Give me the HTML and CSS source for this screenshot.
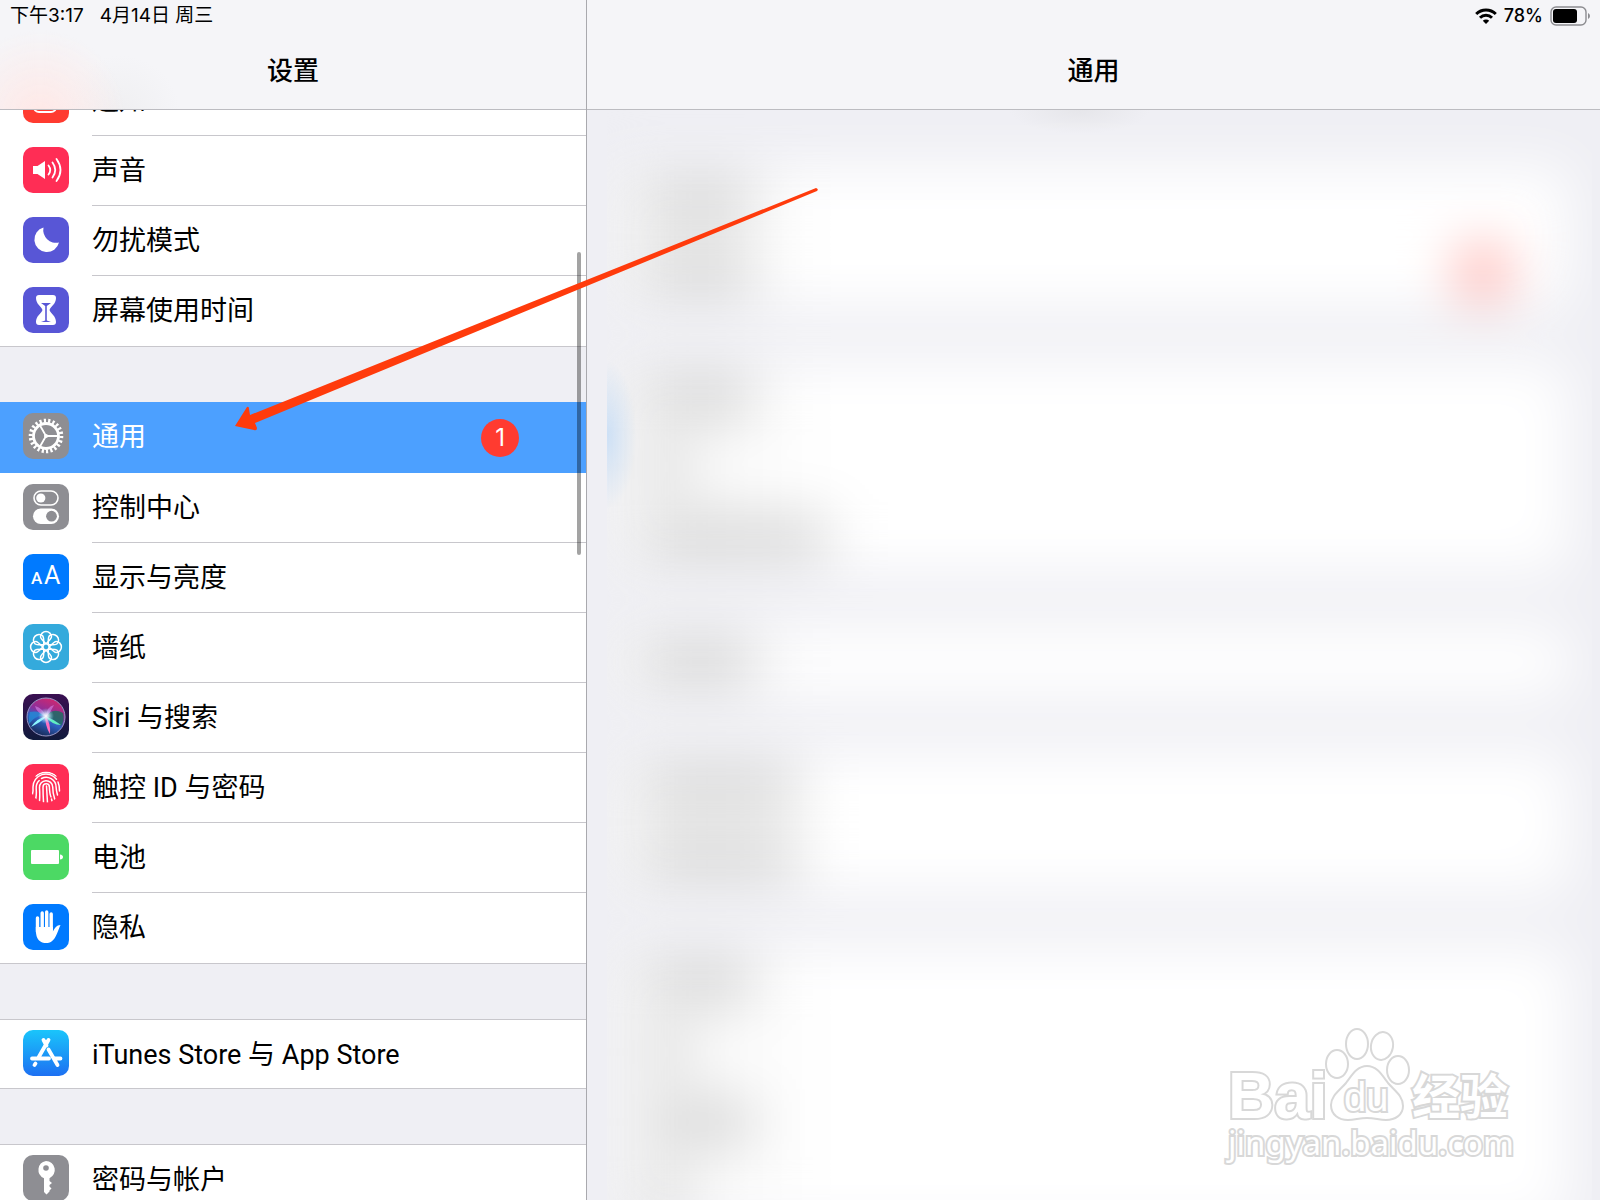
FILE: index.html
```html
<!DOCTYPE html>
<html lang="zh-CN">
<head>
    <meta charset="UTF-8">
    <meta name="viewport" content="width=device-width, initial-scale=1.0">
    <title>设置</title>
    <link rel="stylesheet" href="styles.css">
</head>
<body>
    <div class="settings">
        <aside class="sidebar">
            <header class="bar sidebar-bar">
                <div class="status">
                    <span>下午3:17</span>
                    <span>4月14日 周三</span>
                </div>
                <h1>设置</h1>
            </header>
            <nav class="list">
                <ul class="group scrolled">
                    <li><a class="row" href="#">
                        <svg class="icon red" viewBox="0 0 46 46"><rect x="11" y="12" width="22" height="23" rx="5" fill="none" stroke="#fff" stroke-width="2"/></svg>
                        <span class="label">通知</span>
                    </a></li>
                    <li><a class="row" href="#">
                        <svg class="icon pink" viewBox="0 0 46 46">
                            <path d="M10 19h4.500l7.500-5v18l-7.500-5H10z" fill="#fff"/>
                            <path d="M25.500 18.500q3.500 4.500 0 9M29.500 15.500q5.500 7.500 0 15M33.500 12q8 11 0 22" fill="none" stroke="#fff" stroke-width="1.800" stroke-linecap="round"/>
                        </svg>
                        <span class="label">声音</span>
                    </a></li>
                    <li><a class="row" href="#">
                        <svg class="icon purple" viewBox="0 0 46 46"><path d="M20.500 10.500A12.500 12.500 0 1 0 36 25.500A12.800 12.800 0 0 1 20.500 10.500Z" fill="#fff"/></svg>
                        <span class="label">勿扰模式</span>
                    </a></li>
                    <li><a class="row" href="#">
                        <svg class="icon purple" viewBox="0 0 46 46">
                            <path d="M16 8h14q3 0 3 3c0 6-5 8-6.500 12c1.500 4 6.500 6 6.500 12q0 3-3 3H16q-3 0-3-3c0-6 5-8 6.500-12c-1.500-4-6.500-6-6.500-12q0-3 3-3z" fill="#fff"/>
                            <path d="M18 16h10l-4.200 3v14.500l4.200 1.500H18l4.200-1.500v-14.500z" fill="#5856d6"/>
                        </svg>
                        <span class="label">屏幕使用时间</span>
                    </a></li>
                </ul>
                <ul class="group">
                    <li><a class="row selected" href="#" aria-current="page">
                        <svg class="icon gray" viewBox="0 0 46 46" fill="none" stroke="#fff">
                            <circle cx="23" cy="23" r="12.500" stroke-width="2.800"/>
                            <circle cx="23" cy="23" r="15.300" stroke-width="4" pathLength="44" stroke-dasharray="1 1"/>
                            <circle cx="23" cy="23" r="2" fill="#fff" stroke="none"/>
                            <path d="M23 23h12M23 23l-6-10.500M23 23l-6 10.500" stroke-width="1.800"/>
                        </svg>
                        <span class="label">通用</span>
                        <span class="badge">1</span>
                    </a></li>
                    <li><a class="row" href="#">
                        <svg class="icon gray" viewBox="0 0 46 46">
                            <rect x="11" y="7" width="24" height="14" rx="7" fill="none" stroke="#fff" stroke-width="1.600"/>
                            <circle cx="17.800" cy="14" r="4.600" fill="#fff"/>
                            <rect x="10" y="24.500" width="26" height="15.500" rx="7.700" fill="#fff"/>
                            <circle cx="28.500" cy="32.200" r="5.400" fill="#8e8e93"/>
                        </svg>
                        <span class="label">控制中心</span>
                    </a></li>
                    <li><a class="row" href="#">
                        <svg class="icon blue" viewBox="0 0 46 46" fill="#fff">
                            <text class="icon-text small" x="8" y="30">A</text>
                            <text class="icon-text" x="21" y="30">A</text>
                        </svg>
                        <span class="label">显示与亮度</span>
                    </a></li>
                    <li><a class="row" href="#">
                        <svg class="icon cyan" viewBox="0 0 46 46" fill="none" stroke="#fff" stroke-width="1.500">
                            <circle cx="23" cy="23" r="3.200"/>
                            <g id="petals">
                                <path d="M23 19.800C19.500 16.500 17.500 14.500 17.500 12.800a5.500 5.200 0 0 1 11 0C28.500 14.500 26.500 16.500 23 19.800z"/>
                                <path d="M23 19.800C19.500 16.500 17.500 14.500 17.500 12.800a5.500 5.200 0 0 1 11 0C28.500 14.500 26.500 16.500 23 19.800z" transform="rotate(90 23 23)"/>
                                <path d="M23 19.800C19.500 16.500 17.500 14.500 17.500 12.800a5.500 5.200 0 0 1 11 0C28.500 14.500 26.500 16.500 23 19.800z" transform="rotate(180 23 23)"/>
                                <path d="M23 19.800C19.500 16.500 17.500 14.500 17.500 12.800a5.500 5.200 0 0 1 11 0C28.500 14.500 26.500 16.500 23 19.800z" transform="rotate(270 23 23)"/>
                            </g>
                            <use href="#petals" transform="rotate(45 23 23)"/>
                        </svg>
                        <span class="label">墙纸</span>
                    </a></li>
                    <li><a class="row" href="#">
                        <svg class="icon siri" viewBox="0 0 46 46">
                            <defs>
                                <linearGradient id="orb" x1="0.700" y1="0" x2="0.300" y2="1">
                                    <stop offset="0" stop-color="#d3276d"/>
                                    <stop offset="0.400" stop-color="#8a2f9c"/>
                                    <stop offset="0.600" stop-color="#2d62c4"/>
                                    <stop offset="1" stop-color="#16254f"/>
                                </linearGradient>
                                <radialGradient id="glow">
                                    <stop offset="0" stop-color="#fff"/>
                                    <stop offset="0.300" stop-color="#e6f4ff" stop-opacity="0.800"/>
                                    <stop offset="1" stop-color="#7fdcff" stop-opacity="0"/>
                                </radialGradient>
                            </defs>
                            <circle cx="23" cy="23" r="19" fill="url(#orb)" stroke="#9a9ac8" stroke-width="1"/>
                            <path d="M23 23Q29 13 40 19Q42 26 38 32Q32 25 23 23z" fill="#16705f" opacity="0.800"/>
                            <path d="M23 22Q13 20 6 30Q5 24 7 18Q16 16 23 22z" fill="#2589d6" opacity="0.800"/>
                            <path d="M24 22Q14 24 8 33Q18 28 24 22z" fill="#8cf5ff"/>
                            <path d="M22 22Q30 25 38 31Q29 31 22 22z" fill="#5ff0c0"/>
                            <path d="M22 21Q28 29 27 40Q22 32 22 21z" fill="#ff6ec0"/>
                            <path d="M23 23Q13 18 12 12Q20 14 23 23Q24 12 31 11Q28 18 23 23z" fill="#d886e8" opacity="0.600"/>
                            <circle cx="23" cy="22" r="8" fill="url(#glow)"/>
                        </svg>
                        <span class="label">Siri 与搜索</span>
                    </a></li>
                    <li><a class="row" href="#">
                        <svg class="icon pink" viewBox="0 0 46 46">
                            <clipPath id="finger"><circle cx="23" cy="23" r="15.500"/></clipPath>
                            <g clip-path="url(#finger)" fill="none" stroke="#fff" stroke-width="1.500" stroke-linecap="round">
                                <path d="M23.500 22q.500 9 1 17M20.500 38q-.500-8-.500-15a3.200 3.200 0 0 1 6.400 0q.200 7 1.600 10M28.500 35l.500 2"/>
                                <path d="M16.500 37q.500-5 0-13.500a6.600 6.600 0 0 1 13.200-.500q0 6 2 12"/>
                                <path d="M12.500 35.500q1.200-4 .7-11a10 10 0 0 1 3-8M18.500 14.500a9.900 9.900 0 0 1 14.600 8.500q.2 4 1.400 8"/>
                                <path d="M9.500 30q.8-3 .5-7a13 13 0 0 1 23.500-7.700M35 18q1.700 4 1.500 9"/>
                                <path d="M13 12a15 15 0 0 1 20 0"/>
                            </g>
                        </svg>
                        <span class="label">触控 ID 与密码</span>
                    </a></li>
                    <li><a class="row" href="#">
                        <svg class="icon green" viewBox="0 0 46 46" fill="#fff">
                            <rect x="8" y="16" width="28" height="14" rx="1"/>
                            <path d="M37 20.500q3 .500 3 2.500t-3 2.500z"/>
                        </svg>
                        <span class="label">电池</span>
                    </a></li>
                    <li><a class="row" href="#">
                        <svg class="icon blue" viewBox="0 0 46 46">
                            <path d="M14.500 14v14M19.200 9v16M23.700 8v16M28.200 10v16" stroke="#fff" stroke-width="3.400" stroke-linecap="round"/>
                            <path d="M12.800 23h17.100v4.500c2-3.500 3.500-6.500 7.600-6.500c-2.500 5-4 13-9 16.500c-3 2-8 2-11 0c-4-2.500-4.700-7-4.700-14.500z" fill="#fff"/>
                        </svg>
                        <span class="label">隐私</span>
                    </a></li>
                </ul>
                <ul class="group">
                    <li><a class="row" href="#">
                        <svg class="icon store" viewBox="0 0 46 46" fill="none" stroke="#fff" stroke-width="3.800" stroke-linecap="round">
                            <path d="M25.500 10L15.500 27.500M12.500 33.500l-1 1.500M20.500 10l3 5.500M25.500 19.500L34.500 35M9 28.500h17M32 28.500h5.500"/>
                        </svg>
                        <span class="label">iTunes Store 与 App Store</span>
                    </a></li>
                </ul>
                <ul class="group">
                    <li><a class="row" href="#">
                        <svg class="icon gray" viewBox="0 0 46 46">
                            <path d="M23 6a9 9 0 0 1 3.500 17.200v2.800l2.500 2l-2.500 2v1.500l2 2l-2 2v1l-3 3l-2.500-2.500V23.200A9 9 0 0 1 23 6z" fill="#fff"/>
                            <circle cx="23" cy="13" r="2.800" fill="#8e8e93"/>
                        </svg>
                        <span class="label">密码与帐户</span>
                    </a></li>
                </ul>
            </nav>
            <div class="scrollbar"></div>
        </aside>

        <main class="detail">
            <header class="bar detail-bar">
                <div class="status status-right">
                    <svg class="wifi" viewBox="0 0 22 16" fill="none" stroke="#000" stroke-width="3">
                        <path d="M1.200 6a14 14 0 0 1 19.600 0M5 9.800a8.600 8.600 0 0 1 12 0"/>
                        <path d="M11 16l-3.200-3.300a4.600 4.600 0 0 1 6.400 0z" fill="#000" stroke="none"/>
                    </svg>
                    <span>78%</span>
                    <svg class="battery" viewBox="0 0 40 20">
                        <rect x="1" y="1" width="35" height="18" rx="5" fill="none" stroke="#8c8c90" stroke-width="1.400"/>
                        <rect x="3" y="3" width="24" height="14" rx="3"/>
                        <path d="M38 7q2 1 2 3t-2 3z" fill="#8c8c90"/>
                    </svg>
                </div>
                <h2>通用</h2>
            </header>
            <div class="frost">
                <div class="frost-groups">
                    <div class="frost-group">
                        <div class="frost-row"><i class="short"></i></div>
                        <div class="frost-row"><i class="short"></i><b></b></div>
                    </div>
                    <div class="frost-group">
                        <div class="frost-row"><i class="short"></i></div>
                        <div class="frost-row"><i class="tiny"></i></div>
                        <div class="frost-row"><i class="long"></i></div>
                    </div>
                    <div class="frost-group">
                        <div class="frost-row"><i class="short"></i></div>
                    </div>
                    <div class="frost-group">
                        <div class="frost-row"><i class="medium"></i></div>
                        <div class="frost-row"><i class="medium"></i></div>
                    </div>
                    <div class="frost-group">
                        <div class="frost-row"><i class="short"></i></div>
                        <div class="frost-row"><i class="tiny"></i></div>
                        <div class="frost-row"><i class="short"></i></div>
                        <div class="frost-row"><i class="tiny"></i></div>
                    </div>
                </div>
            </div>
            <svg class="watermark" viewBox="0 0 300 160">
                <text class="mark-bai" x="8" y="98">Bai</text>
                <ellipse cx="117" cy="44" rx="11" ry="14"/>
                <ellipse cx="137" cy="24" rx="11" ry="15"/>
                <ellipse cx="162" cy="26" rx="11" ry="14" transform="rotate(10 162 26)"/>
                <ellipse cx="178" cy="50" rx="11" ry="14"/>
                <path d="M147 46c10 0 15 9 21 17c7 8 15 13 15 23c0 9-8 14-17 14c-7 0-11-2-19-2s-12 2-19 2c-9 0-17-5-17-15c0-9 8-14 15-22c6-8 11-17 21-17z"/>
                <text class="mark-du" x="124" y="91">du</text>
                <text class="mark-cn" x="192" y="94">经验</text>
                <text class="mark-url" x="8" y="135">jingyan.baidu.com</text>
            </svg>
        </main>

        <svg class="arrow" viewBox="0 0 584 244">
            <path d="M0 238L12 219Q14 218 14 221L15 227L581 0Q584 1 582 3L20 235L22 240Q22 243 19 242z" fill="#ff3b0c"/>
        </svg>
    </div>
</body>
</html>
```

FILE: styles.css
```css
* {
    box-sizing: border-box;
}
body {
    margin: 0;
    font-family: Inter, "Noto Sans CJK SC", sans-serif;
    color: #000;
    background-color: #efeff4;
}
h1, h2 {
    margin: 0;
    font-size: 26px;
    line-height: 36px;
    font-weight: 500;
    text-align: center;
}
ul {
    margin: 0;
    padding: 0;
    list-style: none;
}
.settings {
    display: flex;
    position: relative;
    height: 100vh;
    overflow: hidden;
}
.sidebar {
    position: relative;
    display: flex;
    flex-direction: column;
    width: 36.7%;
    border-right: 1px solid #a9a9ae;
}
.detail {
    position: relative;
    display: flex;
    flex-direction: column;
    flex: 1;
    min-width: 0;
}

/* top bars */
.bar {
    flex: none;
    height: 110px;
    border-bottom: 1px solid #bcbcc1;
    background-color: #f5f5f8;
}
.sidebar-bar {
    background-image: radial-gradient(circle at 40px 115px, #ffe8e6 0, rgba(255, 238, 236, 0) 85px),
        radial-gradient(circle at 120px 115px, #efeff1 0, rgba(243, 243, 245, 0) 60px);
}
.status {
    display: flex;
    align-items: center;
    gap: 16px;
    height: 32px;
    margin-bottom: 21px;
    padding: 0 10px;
    font-size: 19px;
    line-height: 32px;
}
.status-right {
    justify-content: flex-end;
    gap: 7px;
    font-size: 18px;
    font-weight: 500;
}
.wifi {
    width: 22px;
    height: 16px;
}
.battery {
    width: 40px;
    height: 20px;
}

/* left list */
.list {
    display: flex;
    flex-direction: column;
    gap: 55px;
    flex: 1;
    min-height: 0;
    overflow: hidden;
}
.group {
    flex: none;
    border-top: 1px solid #c8c7cc;
    border-bottom: 1px solid #c8c7cc;
    background-color: #fff;
}
.scrolled {
    margin-top: -45px;
}
.row {
    display: flex;
    align-items: center;
    gap: 23px;
    height: 70px;
    padding-left: 23px;
    color: #000;
    font-family: Roboto, "Noto Sans CJK SC", sans-serif;
    font-size: 27px;
    text-decoration: none;
}
li:only-child .row {
    height: 68px;
}
.label {
    flex: 1;
    height: 100%;
    border-bottom: 1px solid #c8c7cc;
    line-height: 70px;
}
li:last-child .label,
.selected .label {
    border-bottom: none;
}
.selected {
    height: 71px;
    margin-top: -1px;
    background-color: #4ca0ff;
    color: #fff;
}
.badge {
    width: 38px;
    height: 38px;
    margin-right: 67px;
    border-radius: 50%;
    background-color: #ff3b30;
    font-family: Inter, sans-serif;
    font-size: 24px;
    line-height: 38px;
    text-align: center;
}
.icon {
    flex: none;
    width: 46px;
    height: 46px;
    margin-bottom: 3px;
    border-radius: 10px;
}
.icon-text {
    font-family: Roboto, sans-serif;
    font-size: 25px;
}
.icon-text.small {
    font-size: 17px;
    font-weight: 500;
}
.red { background-color: #ff3b30; }
.pink { background-color: #ff2d55; }
.purple { background-color: #5856d6; }
.gray { background-color: #8e8e93; }
.blue { background-color: #007aff; }
.cyan { background-color: #34aadc; }
.green { background-color: #4cd964; }
.siri { background: linear-gradient(#3a1052, #101a3c); }
.store { background: linear-gradient(#1ac5fb, #1d70f2); }
.scrollbar {
    position: absolute;
    top: 252px;
    right: 5px;
    width: 4px;
    height: 303px;
    border-radius: 2px;
    background-color: rgba(0, 0, 0, 0.36);
}

/* frosted panel */
.frost {
    position: relative;
    flex: 1;
    min-height: 0;
    margin: 0 8px 0 20px;
    overflow: hidden;
    background: radial-gradient(ellipse 70px 24px at 48% 0, #e6e6ea, #efeff4);
}
.frost::after {
    content: "";
    position: absolute;
    top: 250px;
    left: 0;
    width: 30px;
    height: 150px;
    background: radial-gradient(ellipse at 0 50%, rgba(170, 208, 248, 0.5), rgba(170, 208, 248, 0) 70%);
}
.frost-groups {
    display: flex;
    flex-direction: column;
    gap: 55px;
    padding: 57px 24px 0 0;
    filter: blur(28px);
}
.frost-group {
    background: linear-gradient(to right, #f3f3f3, #fff 220px);
}
.frost-row {
    display: flex;
    align-items: center;
    justify-content: space-between;
    height: 70px;
    padding: 0 61px 0 42px;
}
.frost-row i {
    height: 34px;
    background-color: #cdcdcd;
}
.tiny { width: 36px; }
.short { width: 105px; }
.medium { width: 150px; }
.long { width: 180px; }
.frost-row b {
    width: 48px;
    height: 48px;
    border-radius: 50%;
    background-color: #ff948e;
}

/* logo in the corner */
.watermark {
    position: absolute;
    right: 80px;
    bottom: 20px;
    width: 300px;
    height: 160px;
    fill: #fff;
    stroke: #d8d8d8;
    stroke-width: 2;
}
.watermark text {
    paint-order: stroke;
    stroke-width: 4;
}
.mark-bai {
    font: bold 64px "Liberation Sans", sans-serif;
}
.mark-du {
    font: 40px "Liberation Sans", sans-serif;
}
.mark-cn {
    font: bold 48px "Noto Sans CJK SC", sans-serif;
}
.mark-url {
    font: 33px "Noto Sans", sans-serif;
}

.arrow {
    position: absolute;
    top: 188px;
    left: 235px;
    width: 584px;
    height: 244px;
}
```
